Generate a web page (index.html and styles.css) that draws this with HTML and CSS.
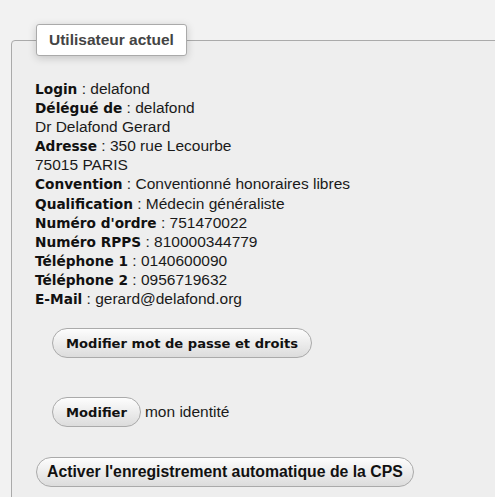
FILE: index.html
```html
<!DOCTYPE html>
<html lang="fr">
<head>
<meta charset="utf-8">
<title>Utilisateur actuel</title>
<link rel="stylesheet" href="styles.css">
</head>
<body>
<fieldset class="panel">
  <legend class="panel-title">Utilisateur actuel</legend>
  <div class="info">
    <div><b>Login</b> : delafond</div>
    <div><b>Délégué de</b> : delafond</div>
    <div>Dr Delafond Gerard</div>
    <div><b>Adresse</b> : 350 rue Lecourbe</div>
    <div>75015 PARIS</div>
    <div><b>Convention</b> : Conventionné honoraires libres</div>
    <div><b>Qualification</b> : Médecin généraliste</div>
    <div><b>Numéro d'ordre</b> : 751470022</div>
    <div><b>Numéro RPPS</b> : 810000344779</div>
    <div><b>Téléphone 1</b> : 0140600090</div>
    <div><b>Téléphone 2</b> : 0956719632</div>
    <div><b>E-Mail</b> : gerard@delafond.org</div>
  </div>
  <div class="row row-pwd"><button class="btn btn-ubuntu">Modifier mot de passe et droits</button></div>
  <div class="row row-id"><button class="btn btn-ubuntu">Modifier</button><span class="after">mon identité</span></div>
  <div class="row row-cps"><button class="btn btn-arial">Activer l'enregistrement automatique de la CPS</button></div>
</fieldset>
</body>
</html>
```
FILE: styles.css
```css
html, body {
  margin: 0;
  padding: 0;
  overflow: hidden;
  height: 100%;
}
body {
  background: #f2f2f2;
  font-family: "Liberation Sans", Arial, sans-serif;
  color: #1a1a1a;
}
.panel {
  margin: 24px -20px 0 11px;
  padding: 0 0 40px 23px;
  border: 1px solid #aaaaaa;
  border-radius: 4px;
  background: #eeeeee;
  min-height: 600px;
}
.panel-title {
  margin-left: 1px;
  padding: 0 12px;
  height: 30px;
  line-height: 30px;
  background: #ffffff;
  border: 1px solid #aaaaaa;
  border-radius: 3px;
  box-shadow: 0 2px 8px rgba(0,0,0,0.18);
  font-weight: bold;
  font-size: 15.5px;
  color: #444444;
  box-sizing: content-box;
}
.info {
  margin-top: 23px;
  font-size: 15.5px;
  line-height: 19.1px;
  color: #1a1a1a;
}
.info div {
  height: 19.1px;
}
.info b {
  font-family: "DejaVu Sans", Verdana, sans-serif;
  font-size: 13.7px;
  line-height: 1;
  font-weight: bold;
  color: #111;
}
.row {
  display: flex;
  align-items: center;
}
.row-pwd { margin: 20px 0 0 17px; }
.row-id { margin: 39px 0 0 17px; }
.row-cps { margin: 30px 0 0 1px; }
.btn {
  height: 30px;
  padding: 0 13px;
  border: 1px solid #aaaaaa;
  border-radius: 15px;
  background: linear-gradient(#fdfdfd, #dcdcdc);
  color: #111;
  font-weight: bold;
  cursor: pointer;
}
.btn-ubuntu {
  font-family: "DejaVu Sans", sans-serif;
  font-size: 13.1px;
}
.btn-arial {
  font-family: "Liberation Sans", Arial, sans-serif;
  font-size: 15.8px;
  padding: 0 10px;
}
.after {
  margin-left: 4px;
  font-size: 15.5px;
}
```
